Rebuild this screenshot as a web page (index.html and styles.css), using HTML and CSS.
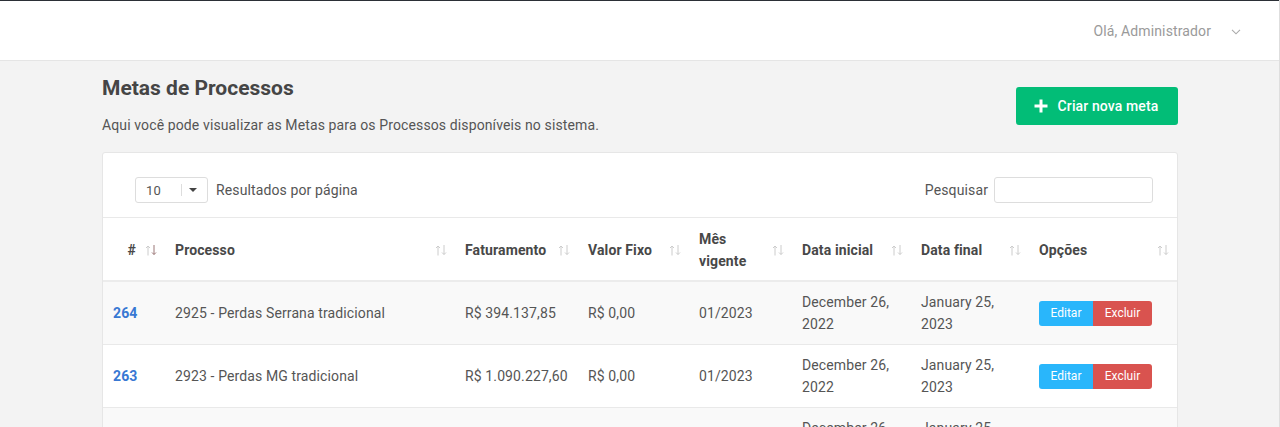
FILE: index.html
```html
<!DOCTYPE html>
<html lang="pt-BR">
<head>
<meta charset="utf-8">
<title>Metas de Processos</title>
<link rel="stylesheet" href="styles.css">
</head>
<body>
<div class="app">
  <header class="topbar">
    <div class="user">
      <span class="user-name">Olá, Administrador</span>
      <svg class="chev" width="10" height="6" viewBox="0 0 10 6"><path d="M1 0.8L5 4.8L9 0.8" fill="none" stroke="#aaa" stroke-width="1.1"/></svg>
    </div>
  </header>
  <main class="main">
    <div class="page-head">
      <div class="page-title">
        <h1>Metas de Processos</h1>
        <p>Aqui você pode visualizar as Metas para os Processos disponíveis no sistema.</p>
      </div>
      <button class="btn-new"><svg width="14" height="14" viewBox="0 0 14 14"><path d="M7 0.5V13.5M0.5 7H13.5" stroke="#fff" stroke-width="3"/></svg><span>Criar nova meta</span></button>
    </div>
    <section class="card">
      <div class="toolbar">
        <div class="length">
          <div class="select"><span class="val">10</span><span class="sep"></span><span class="caret"></span></div>
          <span>Resultados por página</span>
        </div>
        <label class="search">Pesquisar <input type="text"></label>
      </div>
      <table class="grid">
        <colgroup>
          <col style="width:62px"><col style="width:290px"><col style="width:123px"><col style="width:111px"><col style="width:103px"><col style="width:119px"><col style="width:118px"><col style="width:148px">
        </colgroup>
        <thead>
          <tr>
            <th><div class="th first"><span>#</span><svg class="sort active" width="12" height="11" viewBox="0 0 12 11"><path d="M3 10.5V1M1 3L3 1L5 3" fill="none" stroke="#ccc"/><path class="dn" d="M9 0V9.5M7 7.5L9 9.5L11 7.5" fill="none" stroke="#9a7676"/></svg></div></th>
            <th><div class="th"><span>Processo</span><svg class="sort" width="12" height="11" viewBox="0 0 12 11"><path d="M3 10.5V1M1 3L3 1L5 3M9 0V9.5M7 7.5L9 9.5L11 7.5" fill="none" stroke="#ccc"/></svg></div></th>
            <th><div class="th"><span>Faturamento</span><svg class="sort" width="12" height="11" viewBox="0 0 12 11"><path d="M3 10.5V1M1 3L3 1L5 3M9 0V9.5M7 7.5L9 9.5L11 7.5" fill="none" stroke="#ccc"/></svg></div></th>
            <th><div class="th"><span>Valor Fixo</span><svg class="sort" width="12" height="11" viewBox="0 0 12 11"><path d="M3 10.5V1M1 3L3 1L5 3M9 0V9.5M7 7.5L9 9.5L11 7.5" fill="none" stroke="#ccc"/></svg></div></th>
            <th><div class="th"><span>Mês<br>vigente</span><svg class="sort" width="12" height="11" viewBox="0 0 12 11"><path d="M3 10.5V1M1 3L3 1L5 3M9 0V9.5M7 7.5L9 9.5L11 7.5" fill="none" stroke="#ccc"/></svg></div></th>
            <th><div class="th"><span>Data inicial</span><svg class="sort" width="12" height="11" viewBox="0 0 12 11"><path d="M3 10.5V1M1 3L3 1L5 3M9 0V9.5M7 7.5L9 9.5L11 7.5" fill="none" stroke="#ccc"/></svg></div></th>
            <th><div class="th"><span>Data final</span><svg class="sort" width="12" height="11" viewBox="0 0 12 11"><path d="M3 10.5V1M1 3L3 1L5 3M9 0V9.5M7 7.5L9 9.5L11 7.5" fill="none" stroke="#ccc"/></svg></div></th>
            <th><div class="th"><span>Opções</span><svg class="sort" width="12" height="11" viewBox="0 0 12 11"><path d="M3 10.5V1M1 3L3 1L5 3M9 0V9.5M7 7.5L9 9.5L11 7.5" fill="none" stroke="#ccc"/></svg></div></th>
          </tr>
        </thead>
        <tbody>
          <tr class="odd">
            <td><a class="id" href="#">264</a></td>
            <td>2925 - Perdas Serrana tradicional</td>
            <td>R$ 394.137,85</td>
            <td>R$ 0,00</td>
            <td>01/2023</td>
            <td>December 26, 2022</td>
            <td>January 25, 2023</td>
            <td><div class="actions"><button class="b-edit">Editar</button><button class="b-del">Excluir</button></div></td>
          </tr>
          <tr>
            <td><a class="id" href="#">263</a></td>
            <td>2923 - Perdas MG tradicional</td>
            <td>R$ 1.090.227,60</td>
            <td>R$ 0,00</td>
            <td>01/2023</td>
            <td>December 26, 2022</td>
            <td>January 25, 2023</td>
            <td><div class="actions"><button class="b-edit">Editar</button><button class="b-del">Excluir</button></div></td>
          </tr>
          <tr class="odd">
            <td><a class="id" href="#">262</a></td>
            <td>2921 - Perdas SP tradicional</td>
            <td>R$ 512.300,10</td>
            <td>R$ 0,00</td>
            <td>01/2023</td>
            <td>December 26, 2022</td>
            <td>January 25, 2023</td>
            <td><div class="actions"><button class="b-edit">Editar</button><button class="b-del">Excluir</button></div></td>
          </tr>
        </tbody>
      </table>
    </section>
  </main>
</div>
</body>
</html>
```
FILE: styles.css
```css
* { box-sizing: border-box; }
html, body { margin: 0; padding: 0; }
body {
  background: #f3f3f3;
  font-family: Roboto, "Liberation Sans", Arial, sans-serif;
  font-size: 14px;
  letter-spacing: 0.12px;
  color: #555;
  overflow: hidden;
}
.app {
  min-height: 427px;
  border-right: 1px solid #dedede;
}
.topbar {
  height: 61px;
  background: #fff;
  border-top: 1px solid #2b2f36;
  border-bottom: 1px solid #e5e5e5;
  display: flex;
  justify-content: flex-end;
  align-items: center;
  padding-right: 38px;
}
.user {
  display: flex;
  align-items: center;
  gap: 20px;
  color: #9a9a9a;
  font-size: 14px;
  margin-top: 1px;
}
.chev { margin-top: 1px; }
.main {
  padding: 15px 101px 0 102px;
}
.page-head {
  display: flex;
  justify-content: space-between;
  align-items: flex-start;
}
.page-title h1 {
  margin: 0;
  font-size: 21px;
  line-height: 24px;
  font-weight: 700;
  letter-spacing: 0;
  color: #454545;
}
.page-title p {
  margin: 14px 0 0;
  line-height: 22px;
  color: #555;
}
.btn-new {
  margin-top: 11px;
  width: 162px;
  height: 38px;
  background: #02bd77;
  border: 0;
  border-radius: 3px;
  color: #fff;
  font-family: inherit;
  font-size: 14px;
  letter-spacing: 0.12px;
  font-weight: 500;
  display: flex;
  align-items: center;
  justify-content: center;
  gap: 10px;
  padding: 0 2px 0 0;
}
.card {
  margin-top: 16px;
  background: #fff;
  border: 1px solid #e6e6e6;
  border-radius: 3px;
}
.toolbar {
  display: flex;
  justify-content: space-between;
  align-items: center;
  padding: 24px 24px 14px 32px;
  border-bottom: 1px solid #e9e9e9;
}
.length {
  display: flex;
  align-items: center;
  gap: 8px;
}
.select {
  width: 73px;
  height: 26px;
  border: 1px solid #dddddd;
  border-radius: 3px;
  display: flex;
  align-items: center;
  padding-left: 10px;
}
.select .val { font-size: 13px; color: #555; width: 35px; }
.select .sep { width: 1px; height: 12px; background: #ddd; }
.select .caret {
  margin-left: 7px;
  width: 0; height: 0;
  border-left: 4.5px solid transparent;
  border-right: 4.5px solid transparent;
  border-top: 4.5px solid #444;
}
.search {
  display: flex;
  align-items: center;
  gap: 6px;
  color: #555;
}
.search input {
  width: 159px;
  height: 26px;
  border: 1px solid #dddddd;
  border-radius: 3px;
  outline: none;
}
.grid {
  width: 100%;
  border-collapse: collapse;
  table-layout: fixed;
}
.grid th {
  padding: 10px 8px 8px 10px;
  line-height: 22px;
  height: 62px;
  text-align: left;
  font-weight: 700;
  color: #484848;
  border-bottom: 2px solid #ececec;
  vertical-align: middle;
}
.th {
  display: flex;
  justify-content: space-between;
  align-items: center;
}
.th.first { justify-content: flex-end; gap: 9px; padding-right: 0; }
.sort { flex: none; }
.grid td {
  padding: 9px 10px;
  line-height: 22px;
  height: 63px;
  vertical-align: middle;
  border-bottom: 1px solid #e9e9e9;
  color: #555;
}
.grid tr.odd td { background: #f9f9f9; }
.id {
  color: #3878d3;
  font-weight: 700;
  text-decoration: none;
}
.actions { display: flex; }
.actions button {
  height: 25px;
  border: 0;
  color: #fff;
  font-family: inherit;
  font-size: 12px;
  padding: 0;
}
.b-edit {
  width: 54px;
  background: #29b6fb;
  border-radius: 3px 0 0 3px;
}
.b-del {
  width: 59px;
  background: #d9534f;
  border-radius: 0 3px 3px 0;
}
```
